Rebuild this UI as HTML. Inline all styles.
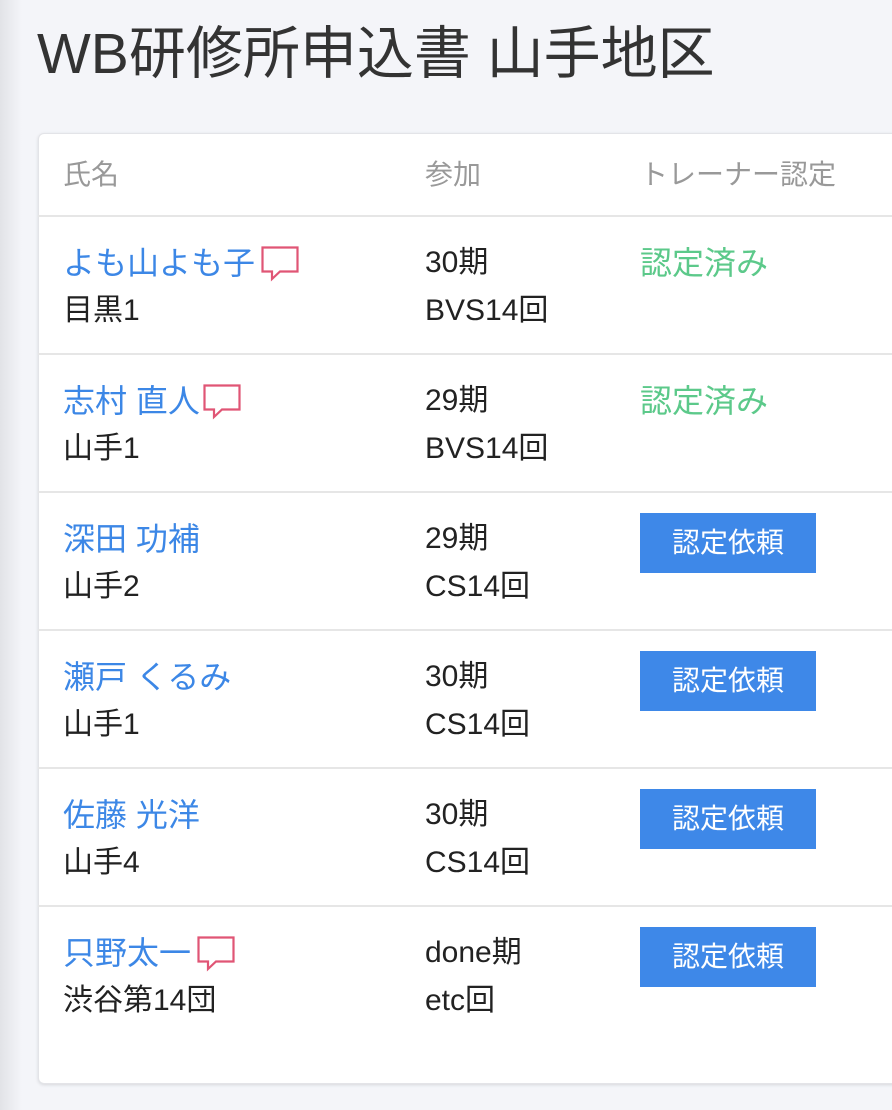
<!DOCTYPE html>
<html><head><meta charset="utf-8"><style>
body{margin:0;width:892px;height:1110px;overflow:hidden;background:#f4f5f9;font-family:"Liberation Sans","Noto Sans CJK JP",sans-serif;position:relative}
.shade{position:absolute;left:0;top:0;width:22px;height:1110px;background:linear-gradient(to right,#e2e3e7,#f4f5f9)}
h1{position:absolute;left:37px;top:12px;margin:0;font-weight:400;font-size:57px;line-height:84px;color:#333;white-space:nowrap}
.card{position:absolute;left:38px;top:133px;width:880px;height:949px;background:#fff;border:1px solid #e3e4e8;border-radius:6px;box-shadow:0 1px 3px rgba(0,0,0,.12)}
.t{position:absolute;white-space:nowrap;line-height:40px}
.h{color:#999;font-size:28px}
.n{color:#3c87e6;font-size:32px}
.s{color:#222;font-size:30px}
.g{color:#5cc98a;font-size:32px}
.line{position:absolute;left:38px;width:860px;height:2px;background:#e6e6e6}
.btn{position:absolute;left:640px;width:176px;height:60px;background:#3e88e8;color:#fff;font-size:28px;line-height:60px;text-align:center}
svg{position:absolute}
</style></head><body>
<div class="shade"></div>
<h1>WB研修所申込書 山手地区</h1>
<div class="card"></div>
<div class="t h" style="left:63px;top:155px">氏名</div>
<div class="t h" style="left:425px;top:155px">参加</div>
<div class="t h" style="left:640px;top:155px">トレーナー認定</div>
<div class="line" style="top:215px"></div>
<div class="line" style="top:353px"></div>
<div class="line" style="top:491px"></div>
<div class="line" style="top:629px"></div>
<div class="line" style="top:767px"></div>
<div class="line" style="top:905px"></div>

<div class="t n" style="left:63px;top:243px">よも山よも子</div>
<svg style="left:261px;top:246px" width="40" height="36"><path d="M1.5 1.5H36.5V25.5H19L11 33V25.5H1.5Z" fill="none" stroke="#e05575" stroke-width="2.2"/></svg>
<div class="t s" style="left:63px;top:291px">目黒1</div>
<div class="t s" style="left:425px;top:243px">30期</div>
<div class="t s" style="left:425px;top:291px">BVS14回</div>
<div class="t g" style="left:640px;top:243px">認定済み</div>

<div class="t n" style="left:63px;top:381px">志村 直人</div>
<svg style="left:203px;top:384px" width="40" height="36"><path d="M1.5 1.5H36.5V25.5H19L11 33V25.5H1.5Z" fill="none" stroke="#e05575" stroke-width="2.2"/></svg>
<div class="t s" style="left:63px;top:429px">山手1</div>
<div class="t s" style="left:425px;top:381px">29期</div>
<div class="t s" style="left:425px;top:429px">BVS14回</div>
<div class="t g" style="left:640px;top:381px">認定済み</div>

<div class="t n" style="left:63px;top:519px">深田 功補</div>
<div class="t s" style="left:63px;top:567px">山手2</div>
<div class="t s" style="left:425px;top:519px">29期</div>
<div class="t s" style="left:425px;top:567px">CS14回</div>
<div class="btn" style="top:513px">認定依頼</div>

<div class="t n" style="left:63px;top:657px">瀬戸 くるみ</div>
<div class="t s" style="left:63px;top:705px">山手1</div>
<div class="t s" style="left:425px;top:657px">30期</div>
<div class="t s" style="left:425px;top:705px">CS14回</div>
<div class="btn" style="top:651px">認定依頼</div>

<div class="t n" style="left:63px;top:795px">佐藤 光洋</div>
<div class="t s" style="left:63px;top:843px">山手4</div>
<div class="t s" style="left:425px;top:795px">30期</div>
<div class="t s" style="left:425px;top:843px">CS14回</div>
<div class="btn" style="top:789px">認定依頼</div>

<div class="t n" style="left:63px;top:933px">只野太一</div>
<svg style="left:197px;top:936px" width="40" height="36"><path d="M1.5 1.5H36.5V25.5H19L11 33V25.5H1.5Z" fill="none" stroke="#e05575" stroke-width="2.2"/></svg>
<div class="t s" style="left:63px;top:981px">渋谷第14団</div>
<div class="t s" style="left:425px;top:933px">done期</div>
<div class="t s" style="left:425px;top:981px">etc回</div>
<div class="btn" style="top:927px">認定依頼</div>
</body></html>
